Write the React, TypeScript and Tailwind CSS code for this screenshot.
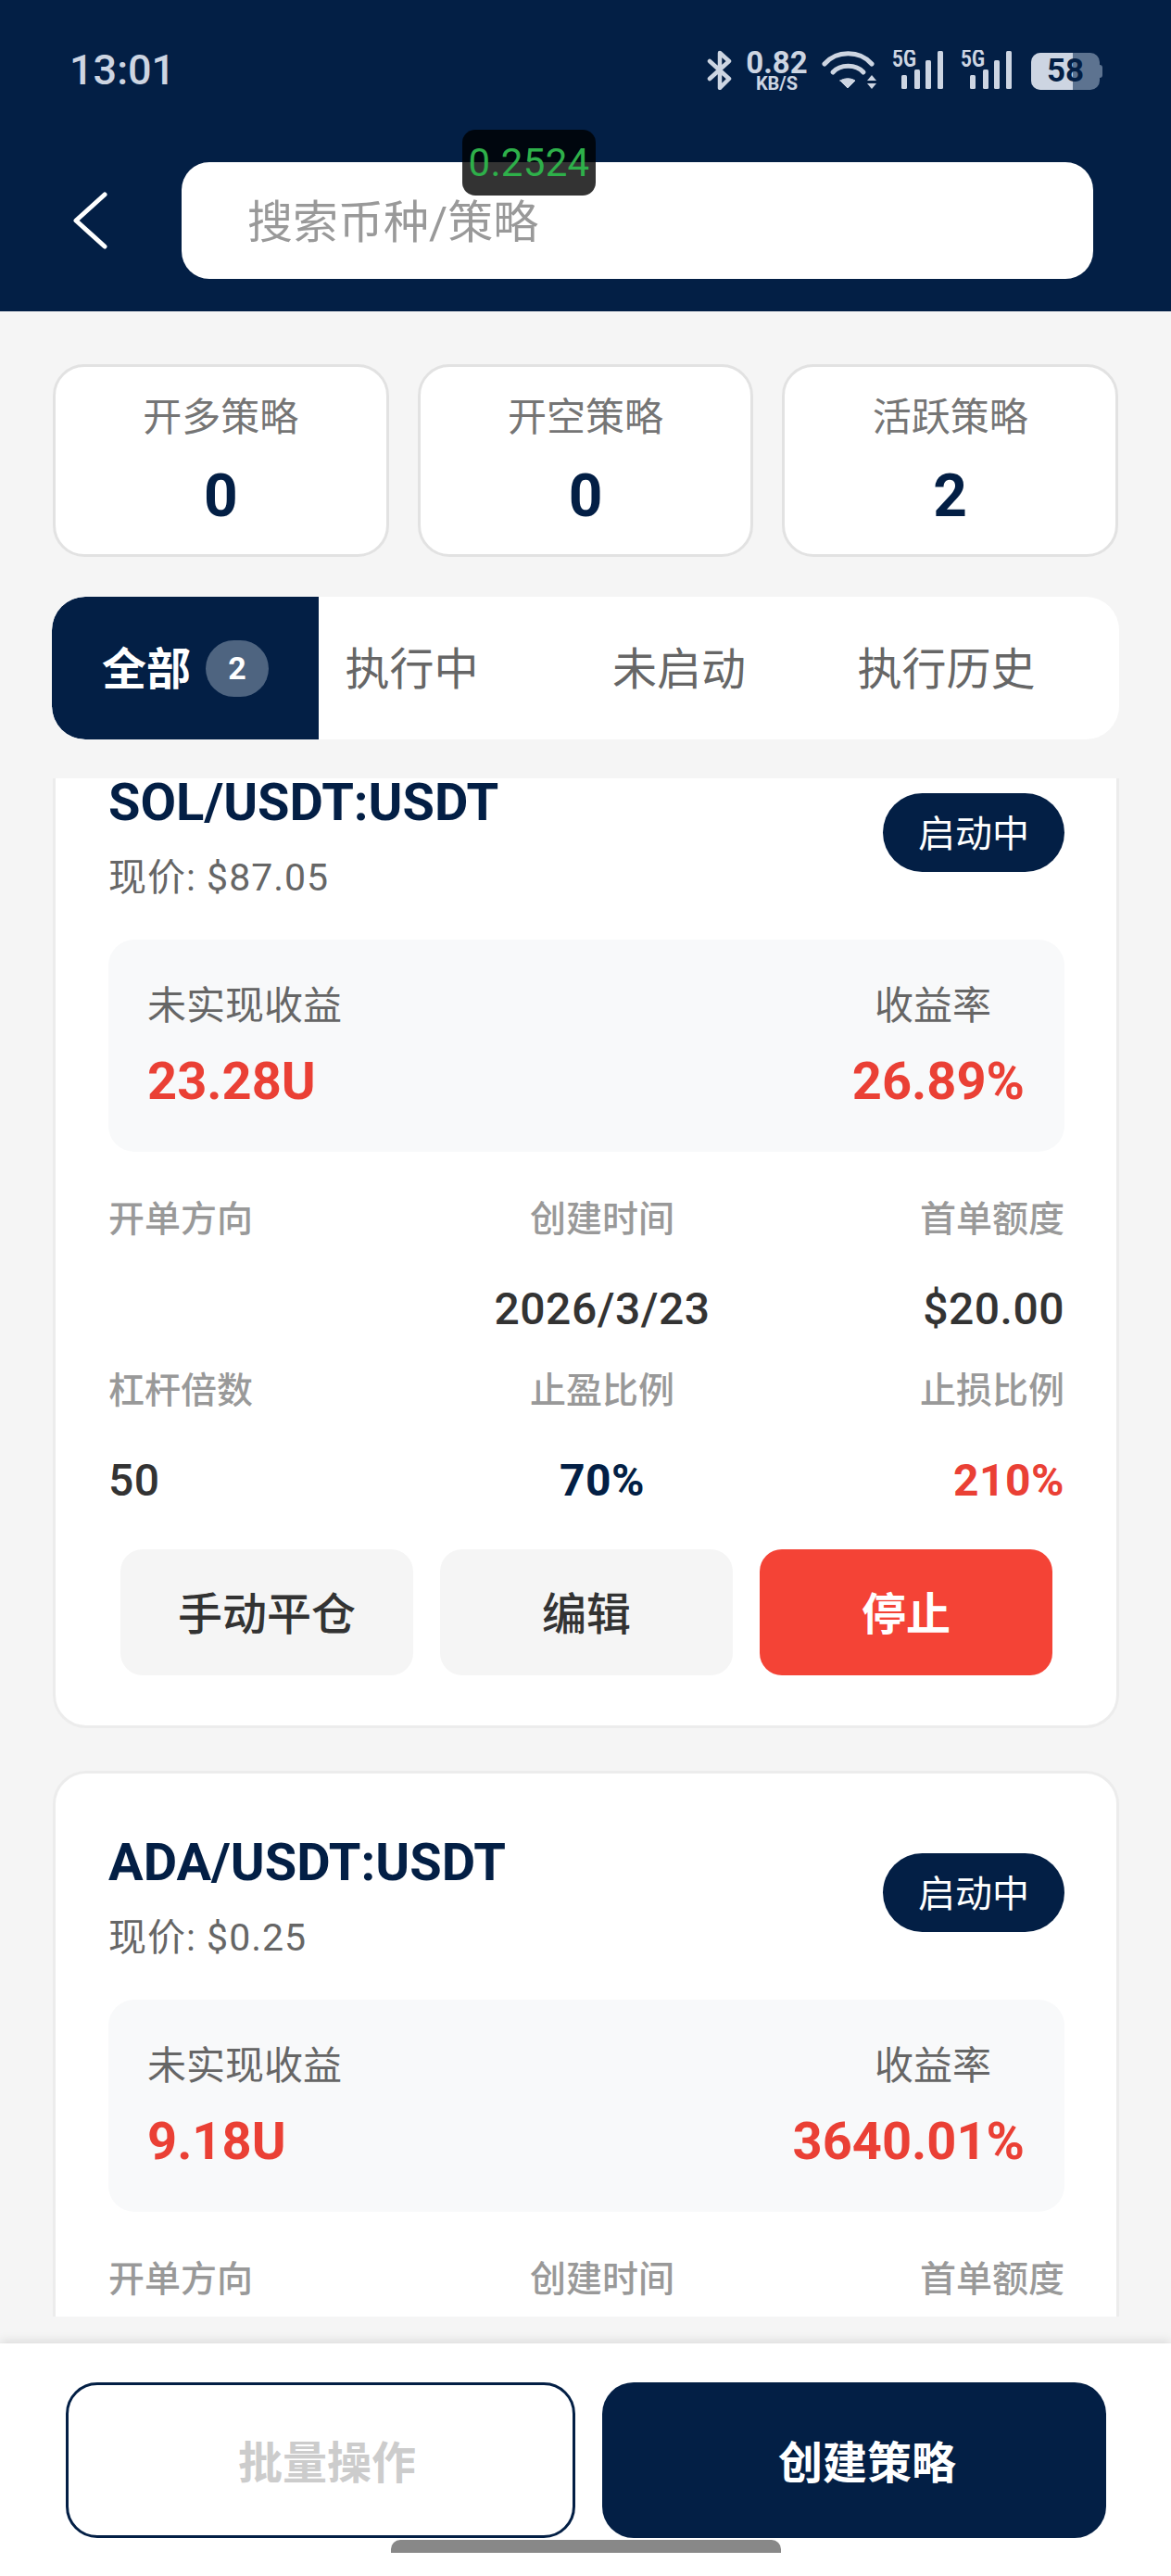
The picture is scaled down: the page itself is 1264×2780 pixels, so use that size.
import React from "react";

const strategies = [
    {
        symbol: "SOL/USDT:USDT",
        price: "$87.05",
        profit: "23.28U",
        rate: "26.89%",
        created: "2026/3/23",
        amount: "$20.00",
        leverage: "50",
        takeProfit: "70%",
        stopLoss: "210%",
    },
    {
        symbol: "ADA/USDT:USDT",
        price: "$0.25",
        profit: "9.18U",
        rate: "3640.01%",
        created: "2026/3/23",
        amount: "$20.00",
        leverage: "50",
        takeProfit: "70%",
        stopLoss: "210%",
    },
];

const stats = [
    { label: "开多策略", value: "0" },
    { label: "开空策略", value: "0" },
    { label: "活跃策略", value: "2" },
];

function Signal() {
    return (
        <svg width="55" height="44" viewBox="0 0 55 44" fill="#cdd5e2">
            <text x="0" y="18" fontSize="25" fontWeight="700" textLength="26" lengthAdjust="spacingAndGlyphs">5G</text>
            <rect x="10" y="27" width="6" height="15" rx="1.5" />
            <rect x="24" y="21" width="6" height="21" rx="1.5" />
            <rect x="36" y="11" width="6" height="31" rx="1.5" />
            <rect x="49" y="1" width="6" height="41" rx="1.5" />
        </svg>
    );
}

function StatusBar() {
    return (
        <div className="flex h-[175px] items-start justify-between pl-[75px] pr-[74px] pt-[54px] text-[#cdd5e2]">
            <span className="text-[45px] font-medium leading-[44px]">13:01</span>
            <div className="flex items-start">
                <svg width="27" height="43" viewBox="0 0 27 43" fill="none" stroke="#cdd5e2" strokeWidth="4.5" strokeLinejoin="round" strokeLinecap="round">
                    <path d="M3 12 L24 31 L14 41 V3 L24 12 L3 31" />
                </svg>
                <div className="ml-[15px] flex w-[67px] flex-col items-center font-bold">
                    <span className="text-[33px] leading-[27px]">0.82</span>
                    <span className="text-[20px] leading-[18px]">KB/S</span>
                </div>
                <svg className="ml-[15px]" width="59" height="43" viewBox="0 0 59 43" fill="none" stroke="#cdd5e2" strokeWidth="5" strokeLinecap="round">
                    <path d="M3 15 C16 0 41 0 54 15" />
                    <path d="M12 24 C20 15 37 15 45 24" />
                    <path d="M20 33 L28 41 L36 33 C31 30 25 30 20 33 Z" fill="#cdd5e2" strokeWidth="1" strokeLinejoin="round" />
                    <path d="M49 33 L54 27 L59 33 Z" fill="#cdd5e2" stroke="none" />
                    <path d="M49 36 L54 42 L59 36 Z" fill="#cdd5e2" stroke="none" />
                </svg>
                <div className="ml-[17px]"><Signal /></div>
                <div className="ml-[19px]"><Signal /></div>
                <div className="relative ml-[21px] mt-[3px] h-[40px] w-[77px]">
                    <div className="h-[40px] w-[74px] overflow-hidden rounded-[10px] bg-[#5d7390]">
                        <div className="h-full w-[45px] bg-[#cdd5e2]"></div>
                    </div>
                    <div className="absolute right-0 top-[13px] h-[14px] w-[3px] rounded-r-sm bg-[#5d7390]"></div>
                    <span className="absolute left-0 top-0 w-[74px] text-center text-[35px] font-bold leading-[40px] text-[#031f45]">58</span>
                </div>
            </div>
        </div>
    );
}

function SearchRow() {
    return (
        <div className="flex h-[161px] items-start pl-[79px]">
            <svg className="mt-[32px]" width="38" height="62" viewBox="0 0 38 62" fill="none" stroke="#ffffff" strokeWidth="5" strokeLinecap="round" strokeLinejoin="round">
                <path d="M34 3 L3 31 L34 59" />
            </svg>
            <div className="ml-[79px] flex h-[126px] w-[984px] items-center rounded-[30px] bg-white pl-[71px] pt-[6px] text-[49px] text-[#999999]">
                搜索币种/策略
            </div>
        </div>
    );
}

function Detail({ label, value, align, color }: { label: string; value: string; align: string; color: string }) {
    return (
        <div className={align}>
            <div className="text-[39px] leading-[48px] text-[#999999]">{label}</div>
            <div className={`mt-[45px] h-[56px] text-[48px] leading-[56px] tracking-[0.5px] ${color}`}>{value}</div>
        </div>
    );
}

function StrategyCard({ item }: { item: typeof strategies[0] }) {
    return (
        <div className="rounded-[36px] border-[3px] border-[#ececec] bg-white pb-[54px] pl-[57px] pr-[56px] pt-[64px]">
            <div className="flex items-start justify-between">
                <div>
                    <div className="text-[56px] font-bold leading-[64px] text-[#031f45]">{item.symbol}</div>
                    <div className="mt-[25px] text-[41px] leading-[48px] tracking-[1px] text-[#666666]">现价: {item.price}</div>
                </div>
                <div className="mt-[22px] flex h-[85px] w-[196px] items-center justify-center rounded-full bg-[#031f45] pt-[5px] text-[40px] text-white">
                    启动中
                </div>
            </div>

            <div className="mt-[43px] flex h-[229px] items-start justify-between rounded-[28px] bg-[#f8f9fa] pl-[42px] pr-[43px] pt-[47px]">
                <div>
                    <div className="text-[42px] leading-[50px] text-[#666666]">未实现收益</div>
                    <div className="mt-[24px] text-[56px] font-bold leading-[64px] text-[#ea4035]">{item.profit}</div>
                </div>
                <div className="text-right">
                    <div className="pr-[36px] text-[42px] leading-[50px] text-[#666666]">收益率</div>
                    <div className="mt-[24px] text-[56px] font-bold leading-[64px] text-[#ea4035]">{item.rate}</div>
                </div>
            </div>

            <div className="mt-[49px] grid grid-cols-[383px_300px_349px] gap-y-[36px] font-medium">
                <Detail label="开单方向" value="" align="text-left" color="text-[#333333]" />
                <Detail label="创建时间" value={item.created} align="text-center" color="text-[#333333]" />
                <Detail label="首单额度" value={item.amount} align="text-right" color="text-[#333333]" />
                <Detail label="杠杆倍数" value={item.leverage} align="text-left" color="text-[#333333]" />
                <Detail label="止盈比例" value={item.takeProfit} align="text-center" color="font-bold text-[#031f45]" />
                <Detail label="止损比例" value={item.stopLoss} align="text-right" color="font-bold text-[#ea4035]" />
            </div>

            <div className="mx-[13px] mt-[46px] flex gap-[29px] text-[48px] font-medium">
                <button className="h-[136px] flex-1 rounded-[24px] bg-[#f5f5f5] pt-[5px] text-[#333333]">手动平仓</button>
                <button className="h-[136px] flex-1 rounded-[24px] bg-[#f5f5f5] pt-[5px] text-[#333333]">编辑</button>
                <button className="h-[136px] flex-1 rounded-[24px] bg-[#f44336] pt-[5px] font-bold text-white">停止</button>
            </div>
        </div>
    );
}

export default function App() {
    return (
        <div className="relative flex h-[2780px] w-[1264px] flex-col overflow-hidden bg-[#f5f5f5] font-['Roboto','Noto_Sans_CJK_SC',sans-serif]">
            <header className="h-[336px] shrink-0 bg-[#031f45]">
                <StatusBar />
                <SearchRow />
            </header>

            {/* floating price debug label */}
            <div className="absolute left-[499px] top-[140px] flex h-[71px] w-[144px] items-center justify-center rounded-[14px] bg-black/80 text-[42px] leading-none tracking-[0.3px] text-[#2eb04a]">
                0.2524
            </div>

            <div className="mx-[57px] mt-[57px] flex h-[208px] shrink-0 gap-[31px]">
                {stats.map((stat) => (
                    <div key={stat.label} className="flex-1 rounded-[34px] border-[3px] border-[#e2e2e2] bg-white pt-[30px] text-center">
                        <div className="text-[42px] leading-[50px] text-[#757575]">{stat.label}</div>
                        <div className="mt-[25px] text-[64px] font-bold leading-[70px] text-[#031f45]">{stat.value}</div>
                    </div>
                ))}
            </div>

            <div className="mx-[56px] mt-[43px] flex h-[154px] w-[1152px] shrink-0 overflow-hidden rounded-[36px] bg-white text-[48px] text-[#666666]">
                <div className="flex w-[288px] items-center rounded-l-[36px] bg-[#031f45] pl-[54px] font-bold text-white">
                    <span className="pt-[4px]">全部</span>
                    <span className="ml-[16px] flex h-[61px] w-[68px] items-center justify-center rounded-full bg-[#4e6480] text-[34px]">2</span>
                </div>
                <div className="flex gap-[88px] pt-[4px]">
                    <div className="flex w-[201px] items-center justify-center">执行中</div>
                    <div className="flex w-[200px] items-center justify-center">未启动</div>
                    <div className="flex w-[201px] items-center justify-center">执行历史</div>
                </div>
            </div>

            <div className="mt-[42px] h-[1660px] shrink-0 overflow-hidden pl-[57px] pr-[56px]">
                {/* list is scrolled, first card starts above the fold */}
                <div className="-mt-[73px] flex flex-col gap-[46px]">
                    {strategies.map((item) => (
                        <StrategyCard key={item.symbol} item={item} />
                    ))}
                </div>
            </div>

            <div className="mt-[29px] flex h-[251px] shrink-0 gap-[29px] bg-white pl-[71px] pt-[42px] shadow-[0_-3px_10px_rgba(0,0,0,0.1)]">
                <button className="h-[168px] w-[550px] rounded-[34px] border-[3px] border-[#031f45] bg-white pl-[14px] pt-[8px] text-[48px] font-bold text-[#cccccc]">批量操作</button>
                <button className="h-[168px] w-[544px] rounded-[34px] bg-[#031f45] pl-[28px] pt-[8px] text-[48px] font-bold text-white">创建策略</button>
            </div>

            <div className="absolute left-[422px] top-[2741px] h-[14px] w-[421px] rounded-t-[10px] bg-[#888888]"></div>
        </div>
    );
}
